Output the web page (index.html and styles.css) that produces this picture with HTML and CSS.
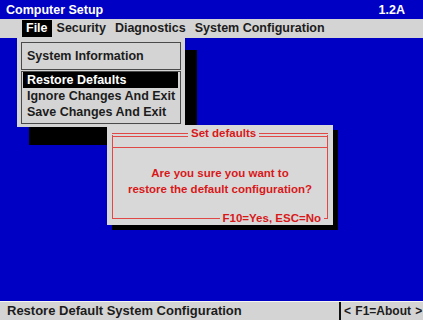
FILE: index.html
```html
<!DOCTYPE html>
<html lang="en">
<head>
    <meta charset="UTF-8">
    <title>Computer Setup</title>
    <link rel="stylesheet" href="styles.css">
</head>
<body>
    <div class="screen">
        <div class="titlebar">
            <span>Computer Setup</span>
            <span class="version">1.2A</span>
        </div>
        <div class="menubar">
            <span class="menu-item active">File</span>
            <span class="menu-item">Security</span>
            <span class="menu-item">Diagnostics</span>
            <span class="menu-item">System Configuration</span>
        </div>
        <div class="desktop">
            <div class="dropdown">
                <div class="group group-info">System Information</div>
                <div class="group group-actions">
                    <div class="option selected">Restore Defaults</div>
                    <div class="option">Ignore Changes And Exit</div>
                    <div class="option">Save Changes And Exit</div>
                </div>
            </div>
            <div class="dialog">
                <div class="frame">
                    <span class="frame-title">Set defaults</span>
                    <div class="frame-head"></div>
                    <div class="frame-body">
                        Are you sure you want to<br>
                        restore the default configuration?
                    </div>
                    <span class="frame-keys">F10=Yes, ESC=No</span>
                </div>
            </div>
        </div>
        <div class="statusbar">
            <span class="status-text">Restore Default System Configuration</span>
            <span class="status-key">&lt; F1=About &gt;</span>
        </div>
    </div>
</body>
</html>
```

FILE: styles.css
```css
html, body { margin: 0; padding: 0; }
body { width: 423px; height: 320px; overflow: hidden; background: #0000c4; font-family: "Liberation Sans", Arial, sans-serif; font-weight: bold; font-size: 12.5px; color: #1c1c1c; }
.screen { display: flex; flex-direction: column; height: 320px; }

.titlebar { height: 19px; display: flex; align-items: center; justify-content: space-between; padding: 0 18px 0 6px; color: #fff; }
.menubar { height: 19px; display: flex; align-items: center; gap: 1px; padding-left: 22px; background: #d4d4d4; }
.menu-item { height: 17px; line-height: 17px; padding: 0 4px; }
.menu-item.active { background: #000; color: #fff; }

.desktop { flex: 1; position: relative; }

.dropdown { position: absolute; left: 17px; top: 0; width: 168px; box-sizing: border-box; padding: 4px 4px 3px; background: #d4d4d4; box-shadow: 12px 12px 0 #000, 12px 18px 0 #000; }
.group { border: 1px solid #4a4a4a; }
.group-info { height: 28px; box-sizing: border-box; line-height: 26px; padding-left: 5px; }
.group-actions { margin-top: 1px; padding: 0 2px 3px 1px; }
.option { height: 16px; line-height: 16px; padding-left: 4px; }
.option.selected { background: #000; color: #fff; }

.dialog { position: absolute; left: 107px; top: 87px; width: 226px; height: 100px; box-sizing: border-box; padding: 8px 5px 0; background: #d8d8d8; box-shadow: 5px 5px 0 #000; font-size: 11.5px; color: #d81818; }
.frame { position: relative; height: 86px; box-sizing: border-box; border: 1px solid #e04848; border-top: 4px double #e04848; }
.frame-head { height: 10px; border-bottom: 1px solid #e04848; }
.frame-title { position: absolute; left: 75px; top: -10px; line-height: 13px; padding: 0 3px; background: #d8d8d8; }
.frame-body { padding-top: 17px; line-height: 16px; text-align: center; }
.frame-keys { position: absolute; right: 3px; bottom: -7px; line-height: 13px; padding: 0 3px; background: #d8d8d8; }

.statusbar { height: 18px; display: flex; align-items: stretch; border-top: 1px solid #f4f4f4; background: #d4d4d4; font-size: 13px; }
.status-text { flex: 1; line-height: 18px; padding-left: 7px; }
.status-key { flex: 0 0 84px; box-sizing: border-box; border-left: 2px solid #111; line-height: 18px; padding-left: 3px; font-size: 12px; word-spacing: 1px; }
```
